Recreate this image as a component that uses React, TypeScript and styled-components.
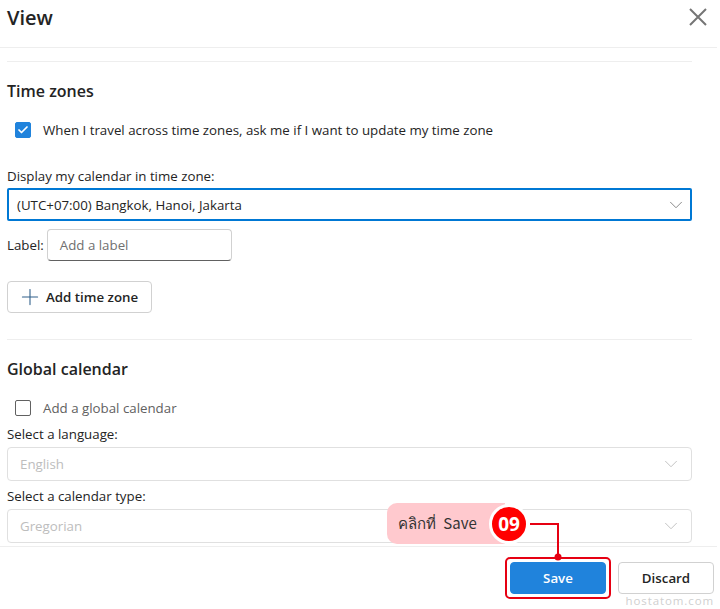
import styled, { createGlobalStyle } from "styled-components";
import { Check, ChevronDown, Plus } from "lucide-react";

const GlobalStyle = createGlobalStyle`
  html, body {
    margin: 0;
    padding: 0;
    background: #ffffff;
  }
  * {
    box-sizing: border-box;
  }
`;

const Page = styled.div`
  position: relative;
  width: 717px;
  height: 609px;
  display: flex;
  flex-direction: column;
  overflow: hidden;
  background: #ffffff;
  color: #242424;
  font-family: "Open Sans", "Noto Sans", sans-serif;
  font-size: 13.3px;
`;

const Header = styled.header`
  height: 48px;
  flex: none;
  display: flex;
  align-items: flex-start;
  justify-content: space-between;
  padding: 4px 10px 0 7px;
  border-bottom: 1px solid #eeeeee;
`;

const Title = styled.h1`
  margin: 0;
  font-size: 20px;
  line-height: 28px;
  font-weight: 600;
`;

const CloseButton = styled.button`
  border: none;
  background: none;
  padding: 0;
  margin-top: 4px;
  width: 18px;
  height: 18px;
  color: #757575;
  display: flex;
`;

const Body = styled.main`
  flex: 1;
  padding: 13px 25px 0 7px;
  display: flex;
  flex-direction: column;
`;

const Rule = styled.hr<{ $top?: number }>`
  margin: ${(p) => p.$top ?? 0}px 0 0;
  border: none;
  border-top: 1px solid #eeeeee;
`;

const SectionTitle = styled.h2<{ $top: number }>`
  margin: ${(p) => p.$top}px 0 0;
  font-size: 16px;
  line-height: 22px;
  font-weight: 600;
`;

const CheckRow = styled.label<{ $top: number; $muted?: boolean }>`
  display: flex;
  align-items: center;
  gap: 12px;
  height: 16px;
  margin: ${(p) => p.$top}px 0 0 8px;
  color: ${(p) => (p.$muted ? "#616161" : "#242424")};
  white-space: nowrap;
`;

const CheckBox = styled.span<{ $checked?: boolean }>`
  width: 16px;
  height: 16px;
  flex: none;
  display: flex;
  align-items: center;
  justify-content: center;
  border-radius: 2px;
  border: 1px solid ${(p) => (p.$checked ? "#2083dc" : "#616161")};
  background: ${(p) => (p.$checked ? "#2083dc" : "#ffffff")};
  color: #ffffff;
`;

const FieldLabel = styled.div<{ $top: number }>`
  margin-top: ${(p) => p.$top}px;
  line-height: 18px;
  white-space: nowrap;
`;

const Select = styled.div<{ $active?: boolean; $top: number }>`
  height: ${(p) => (p.$active ? 33 : 34)}px;
  margin-top: ${(p) => p.$top}px;
  display: flex;
  align-items: center;
  justify-content: space-between;
  padding: ${(p) => (p.$active ? "0 3px 0 8px" : "0 9px 0 12px")};
  border: ${(p) => (p.$active ? "2px solid #0078d4" : "1px solid #e0e0e0")};
  border-radius: ${(p) => (p.$active ? 2 : 4)}px;
  color: ${(p) => (p.$active ? "#242424" : "#bdbdbd")};
  svg {
    color: ${(p) => (p.$active ? "#808080" : "#bdbdbd")};
  }
`;

const LabelRow = styled.div`
  margin-top: 8px;
  display: flex;
  align-items: center;
  gap: 3px;
`;

const LabelInput = styled.div`
  width: 185px;
  height: 32px;
  display: flex;
  align-items: center;
  padding: 0 12px;
  border: 1px solid #d1d1d1;
  border-bottom-color: #616161;
  border-radius: 4px;
  color: #707070;
`;

const AddButton = styled.button`
  width: 145px;
  height: 32px;
  margin-top: 20px;
  padding: 0 0 0 9px;
  display: flex;
  align-items: center;
  gap: 3px;
  background: #ffffff;
  border: 1px solid #d1d1d1;
  border-radius: 4px;
  color: #242424;
  font: 600 13.3px "Open Sans", "Noto Sans", sans-serif;
  white-space: nowrap;
  svg {
    color: #2f5f8a;
  }
`;

const Footer = styled.footer`
  height: 63px;
  flex: none;
  border-top: 1px solid #eeeeee;
  padding: 15px 3px 0 0;
  display: flex;
  justify-content: flex-end;
  gap: 12px;
`;

const FooterButton = styled.button<{ $primary?: boolean }>`
  width: 96px;
  height: 32px;
  border-radius: 4px;
  border: 1px solid ${(p) => (p.$primary ? "#2083dc" : "#d1d1d1")};
  background: ${(p) => (p.$primary ? "#2083dc" : "#ffffff")};
  color: ${(p) => (p.$primary ? "#ffffff" : "#242424")};
  font: 600 13.3px "Open Sans", "Noto Sans", sans-serif;
  padding: 0;
`;

const Callout = styled.div`
  position: absolute;
  left: 387px;
  top: 503px;
  width: 118px;
  height: 41px;
  display: flex;
  align-items: center;
  padding-left: 11px;
  border-radius: 10px 0 0 10px;
  background: #ffc9ce;
  color: #333333;
  font-family: "Noto Sans CJK SC", "Open Sans", "Noto Sans", sans-serif;
  font-size: 15px;
  word-spacing: 4px;
  white-space: nowrap;
`;

const StepBadge = styled.div`
  position: absolute;
  left: 489px;
  top: 504px;
  width: 40px;
  height: 40px;
  display: flex;
  align-items: center;
  justify-content: center;
  border-radius: 50%;
  background: #ff0000;
  border: 3px solid #ffffff;
  color: #ffffff;
  font-size: 19px;
  font-weight: 700;
`;

const Highlight = styled.div`
  position: absolute;
  left: 505px;
  top: 557px;
  width: 106px;
  height: 42px;
  border: 2px solid #e60012;
  border-radius: 5px;
`;

const Connector = styled.svg`
  position: absolute;
  left: 525px;
  top: 520px;
`;

const Watermark = styled.div`
  position: absolute;
  right: 3px;
  bottom: 1px;
  color: #d0d0d0;
  font-size: 11.5px;
  line-height: 14px;
  letter-spacing: 0.9px;
`;

export default function App() {
  return (
    <Page>
      <GlobalStyle />
      <Header>
        <Title>View</Title>
        <CloseButton aria-label="Close">
          <svg width="18" height="18" viewBox="0 0 18 18">
            <path d="M1 1L17 17M17 1L1 17" fill="none" stroke="currentColor" strokeWidth="2" />
          </svg>
        </CloseButton>
      </Header>
      <Body>
        <Rule />
        <SectionTitle $top={18}>Time zones</SectionTitle>
        <CheckRow $top={20}>
          <CheckBox $checked>
            <Check size={12} strokeWidth={3.5} />
          </CheckBox>
          When I travel across time zones, ask me if I want to update my time zone
        </CheckRow>
        <FieldLabel $top={29}>Display my calendar in time zone:</FieldLabel>
        <Select $active $top={3}>
          (UTC+07:00) Bangkok, Hanoi, Jakarta
          <ChevronDown size={22} strokeWidth={1} />
        </Select>
        <LabelRow>
          Label:
          <LabelInput>Add a label</LabelInput>
        </LabelRow>
        <AddButton>
          <Plus size={26} strokeWidth={1} />
          Add time zone
        </AddButton>
        <Rule $top={26} />
        <SectionTitle $top={18}>Global calendar</SectionTitle>
        <CheckRow $top={20} $muted>
          <CheckBox />
          Add a global calendar
        </CheckRow>
        <FieldLabel $top={9}>Select a language:</FieldLabel>
        <Select $top={4}>
          English
          <ChevronDown size={22} strokeWidth={1} />
        </Select>
        <FieldLabel $top={6}>Select a calendar type:</FieldLabel>
        <Select $top={4}>
          Gregorian
          <ChevronDown size={22} strokeWidth={1} />
        </Select>
      </Body>
      <Footer>
        <FooterButton $primary>Save</FooterButton>
        <FooterButton>Discard</FooterButton>
      </Footer>
      <Callout>คลิกที่ Save</Callout>
      <Connector width="40" height="42" viewBox="0 0 40 42">
        <path d="M5 4H33V37" fill="none" stroke="#e60012" strokeWidth="2" />
        <circle cx="33" cy="37" r="3.5" fill="#e60012" />
      </Connector>
      <StepBadge>09</StepBadge>
      <Highlight />
      <Watermark>hostatom.com</Watermark>
    </Page>
  );
}
